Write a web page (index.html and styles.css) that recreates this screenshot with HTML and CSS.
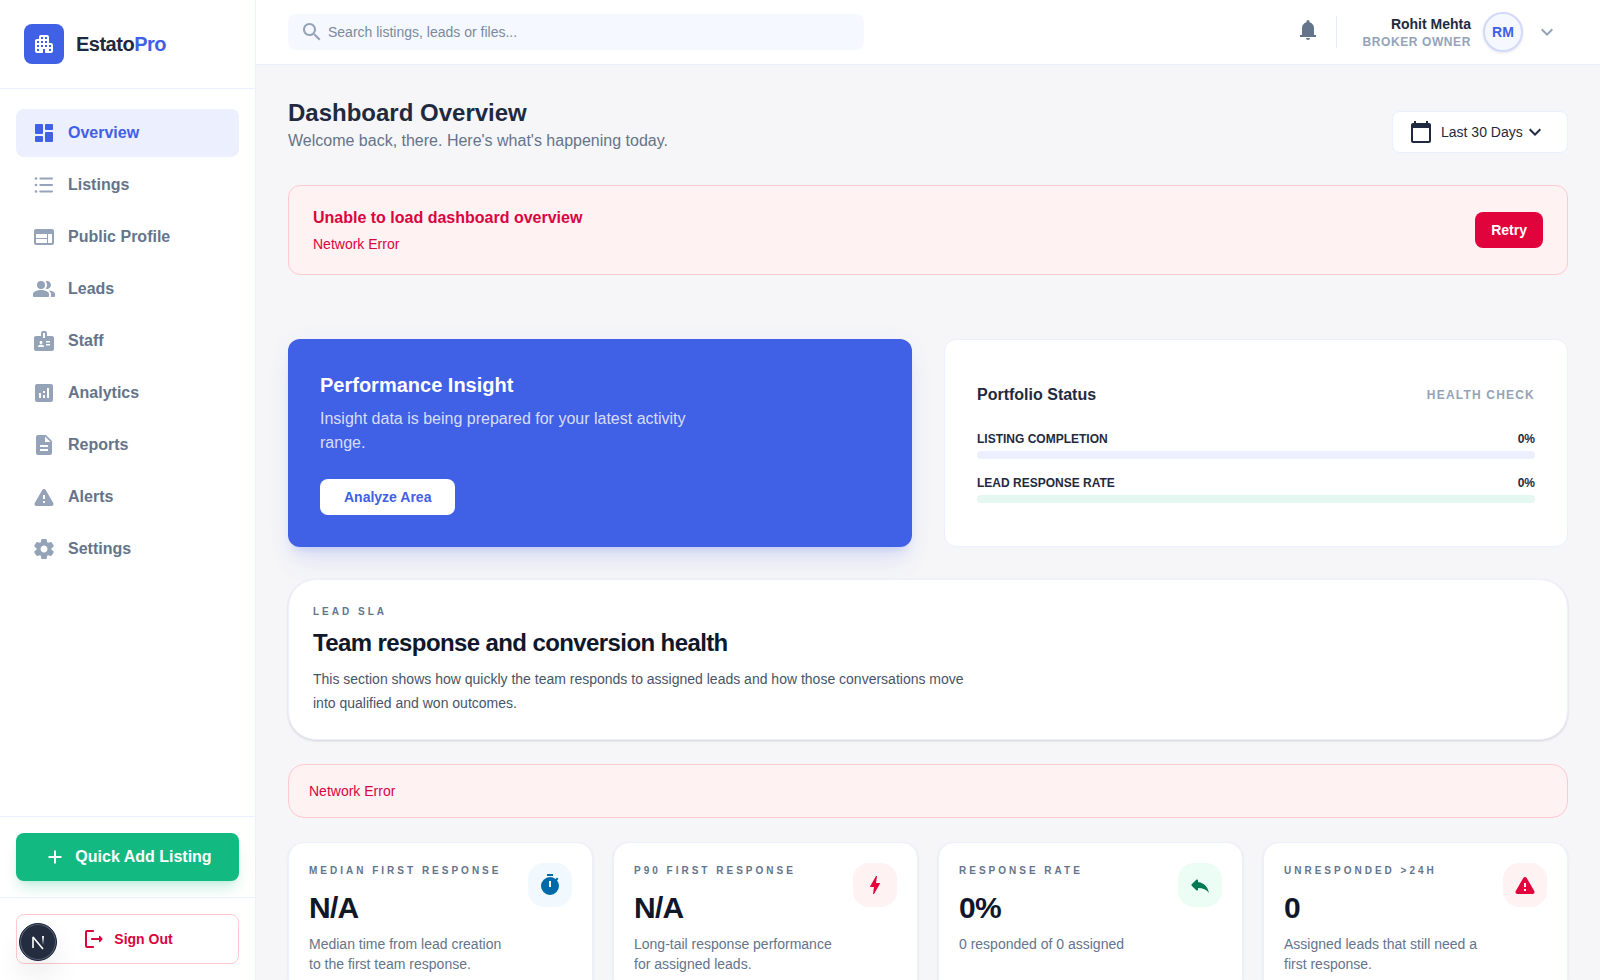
FILE: index.html
```html
<!DOCTYPE html>
<html lang="en">
<head>
    <meta charset="UTF-8">
    <meta name="viewport" content="width=device-width, initial-scale=1.0">
    <title>EstatoPro - Dashboard</title>
    <link rel="stylesheet" href="styles.css">
</head>
<body>
    <div class="app">
        <aside class="sidebar">
            <div class="brand">
                <div class="brand-icon">
                    <svg class="icon" viewBox="0 0 24 24"><path d="M17 11V5c0-1.1-.9-2-2-2H9c-1.1 0-2 .9-2 2v2H5c-1.1 0-2 .9-2 2v10c0 1.1.9 2 2 2h5c.55 0 1-.45 1-1v-3h2v3c0 .55.45 1 1 1h5c1.1 0 2-.9 2-2v-6c0-1.1-.9-2-2-2h-2zM7 19H5v-2h2v2zm0-4H5v-2h2v2zm0-4H5V9h2v2zm4 4H9v-2h2v2zm0-4H9V9h2v2zm0-4H9V5h2v2zm4 8h-2v-2h2v2zm0-4h-2V9h2v2zm0-4h-2V5h2v2zm4 12h-2v-2h2v2zm0-4h-2v-2h2v2z"/></svg>
                </div>
                <span class="brand-name">Estato<span class="brand-accent">Pro</span></span>
            </div>

            <nav class="nav">
                <a href="#" class="nav-link active">
                    <svg class="icon" viewBox="0 0 24 24"><rect x="3" y="3" width="8" height="10" rx="1"/><rect x="3" y="15" width="8" height="6" rx="1"/><rect x="13" y="11" width="8" height="10" rx="1"/><rect x="13" y="3" width="8" height="6" rx="1"/></svg>
                    Overview
                </a>
                <a href="#" class="nav-link">
                    <svg class="icon" viewBox="0 0 24 24"><circle cx="4" cy="5.5" r="1.3"/><circle cx="4" cy="12" r="1.3"/><circle cx="4" cy="18.5" r="1.3"/><rect x="7.3" y="4.5" width="13.7" height="2" rx="1"/><rect x="7.3" y="11" width="13.7" height="2" rx="1"/><rect x="7.3" y="17.5" width="13.7" height="2" rx="1"/></svg>
                    Listings
                </a>
                <a href="#" class="nav-link">
                    <svg class="icon" viewBox="0 0 24 24"><path d="M20 4H4c-1.1 0-1.99.9-1.99 2L2 18c0 1.1.9 2 2 2h16c1.1 0 2-.9 2-2V6c0-1.1-.9-2-2-2zm-5 14H4v-4h11v4zm0-5H4V9h11v4zm5 5h-4V9h4v9z"/></svg>
                    Public Profile
                </a>
                <a href="#" class="nav-link">
                    <svg class="icon" viewBox="0 0 24 24"><circle cx="9" cy="8" r="4"/><path d="M16.67 13.13C18.04 14.06 19 15.32 19 17v3h3c.55 0 1-.45 1-1v-2c0-2.18-3.57-3.47-6.33-3.87zM15 12c2.21 0 4-1.79 4-4s-1.79-4-4-4c-.47 0-.91.1-1.33.24C14.5 5.27 15 6.58 15 8s-.5 2.73-1.33 3.76c.42.14.86.24 1.33.24zM9 13c-2.67 0-8 1.34-8 4v2c0 .55.45 1 1 1h14c.55 0 1-.45 1-1v-2c0-2.66-5.33-4-8-4z"/></svg>
                    Leads
                </a>
                <a href="#" class="nav-link">
                    <svg class="icon" viewBox="0 0 24 24"><path d="M20 7h-5V4c0-1.1-.9-2-2-2h-2c-1.1 0-2 .9-2 2v3H4c-1.1 0-2 .9-2 2v11c0 1.1.9 2 2 2h16c1.1 0 2-.9 2-2V9c0-1.1-.9-2-2-2zM9 12c.83 0 1.5.67 1.5 1.5S9.83 15 9 15s-1.5-.67-1.5-1.5S8.17 12 9 12zm3 6H6v-.75c0-1 2-1.5 3-1.5s3 .5 3 1.5V18zm1-9h-2V4h2v5zm5 7.5h-4V15h4v1.5zm0-3h-4V12h4v1.5z"/></svg>
                    Staff
                </a>
                <a href="#" class="nav-link">
                    <svg class="icon" viewBox="0 0 24 24"><path d="M19 3H5c-1.1 0-2 .9-2 2v14c0 1.1.9 2 2 2h14c1.1 0 2-.9 2-2V5c0-1.1-.9-2-2-2zM9 17H7v-5h2v5zm4 0h-2v-3h2v3zm0-5h-2v-2h2v2zm4 5h-2V7h2v10z"/></svg>
                    Analytics
                </a>
                <a href="#" class="nav-link">
                    <svg class="icon" viewBox="0 0 24 24"><path d="M14 2H6c-1.1 0-1.99.9-1.99 2L4 20c0 1.1.89 2 1.99 2H18c1.1 0 2-.9 2-2V8l-6-6zm2 16H8v-2h8v2zm0-4H8v-2h8v2zm-3-5V3.5L18.5 9H13z"/></svg>
                    Reports
                </a>
                <a href="#" class="nav-link">
                    <svg class="icon" viewBox="0 0 24 24"><path d="M4.47 21h15.06c1.54 0 2.5-1.67 1.73-3L13.73 4.99c-.77-1.33-2.69-1.33-3.46 0L2.74 18c-.77 1.33.19 3 1.73 3zM13 14h-2v-4h2v4zm0 4h-2v-2h2v2z"/></svg>
                    Alerts
                </a>
                <a href="#" class="nav-link">
                    <svg class="icon" viewBox="0 0 24 24"><path d="M19.5 12c0-.23-.01-.45-.03-.68l1.86-1.41c.4-.3.51-.86.26-1.3l-1.87-3.23c-.25-.44-.79-.62-1.25-.42l-2.15.91c-.37-.26-.76-.49-1.17-.68l-.29-2.31c-.06-.5-.49-.88-.99-.88h-3.73c-.51 0-.94.38-1 .88l-.29 2.31c-.41.19-.8.42-1.17.68l-2.15-.91c-.46-.2-1-.02-1.25.42L2.41 8.62c-.25.44-.14.99.26 1.3l1.86 1.41c-.02.22-.03.44-.03.67s.01.45.03.68l-1.86 1.41c-.4.3-.51.86-.26 1.3l1.87 3.23c.25.44.79.62 1.25.42l2.15-.91c.37.26.76.49 1.17.68l.29 2.31c.06.5.49.88.99.88h3.73c.5 0 .93-.38.99-.88l.29-2.31c.41-.19.8-.42 1.17-.68l2.15.91c.46.2 1 .02 1.25-.42l1.87-3.23c.25-.44.14-.99-.26-1.3l-1.86-1.41c.03-.23.04-.45.04-.68zm-7.46 3.5c-1.93 0-3.5-1.57-3.5-3.5s1.57-3.5 3.5-3.5 3.5 1.57 3.5 3.5-1.57 3.5-3.5 3.5z"/></svg>
                    Settings
                </a>
            </nav>

            <div class="sidebar-section">
                <button class="add-btn">
                    <svg class="icon" viewBox="0 0 24 24"><path d="M18.5 13H13v5.5h-2V13H5.5v-2H11V5.5h2V11h5.5z"/></svg>
                    Quick Add Listing
                </button>
            </div>
            <div class="sidebar-section">
                <button class="signout-btn">
                    <svg class="icon" viewBox="0 0 24 24"><path d="M5 5h6c.55 0 1-.45 1-1s-.45-1-1-1H5c-1.1 0-2 .9-2 2v14c0 1.1.9 2 2 2h6c.55 0 1-.45 1-1s-.45-1-1-1H5V5zM20.65 11.65l-2.79-2.79c-.32-.32-.86-.1-.86.35V11h-7c-.55 0-1 .45-1 1s.45 1 1 1h7v1.79c0 .45.54.67.85.35l2.79-2.79c.2-.19.2-.51.01-.7z"/></svg>
                    Sign Out
                </button>
            </div>
        </aside>

        <div class="page">
            <header class="topbar">
                <div class="search">
                    <svg class="icon" viewBox="0 0 24 24"><path d="M15.5 14h-.79l-.28-.27C15.41 12.59 16 11.11 16 9.5 16 5.91 13.09 3 9.5 3S3 5.91 3 9.5 5.91 16 9.5 16c1.61 0 3.09-.59 4.23-1.57l.27.28v.79l5 4.99L20.49 19l-4.99-5zm-6 0C7.01 14 5 11.99 5 9.5S7.01 5 9.5 5 14 7.01 14 9.5 11.99 14 9.5 14z"/></svg>
                    <input type="text" aria-label="Search" placeholder="Search listings, leads or files...">
                </div>
                <div class="topbar-right">
                    <button class="bell-btn" aria-label="Notifications">
                        <svg class="icon" viewBox="0 0 24 24"><path d="M4 19v-2h2v-7c0-2.8 1.7-5 4.5-5.8v-.7a1.5 1.5 0 0 1 3 0v.7C16.3 5 18 7.2 18 10v7h2v2zM12 22a2 2 0 0 1-2-2h4a2 2 0 0 1-2 2z"/></svg>
                    </button>
                    <button class="profile">
                        <span class="profile-text">
                            <span class="profile-name">Rohit Mehta</span>
                            <span class="profile-role">BROKER OWNER</span>
                        </span>
                        <span class="avatar">RM</span>
                        <svg class="icon" viewBox="0 0 24 24"><path d="M7.4 8.6 12 13.2l4.6-4.6L18 10l-6 6-6-6z"/></svg>
                    </button>
                </div>
            </header>

            <main class="content">
                <div class="page-head">
                    <div>
                        <h1>Dashboard Overview</h1>
                        <p>Welcome back, there. Here's what's happening today.</p>
                    </div>
                    <div class="range">
                        <svg class="icon" viewBox="0 0 24 24"><path d="M20 3h-1V1h-2v2H7V1H5v2H4c-1.1 0-2 .9-2 2v16c0 1.1.9 2 2 2h16c1.1 0 2-.9 2-2V5c0-1.1-.9-2-2-2m0 18H4V8h16z"/></svg>
                        <select aria-label="Date range">
                            <option>Last 30 Days</option>
                            <option>Last 7 Days</option>
                            <option>Last 90 Days</option>
                        </select>
                        <svg class="icon range-arrow" viewBox="0 0 24 24"><path d="M7.4 8.6 12 13.2l4.6-4.6L18 10l-6 6-6-6z"/></svg>
                    </div>
                </div>

                <div class="error-banner">
                    <div>
                        <h2>Unable to load dashboard overview</h2>
                        <p>Network Error</p>
                    </div>
                    <button class="retry-btn">Retry</button>
                </div>

                <div class="panels">
                    <section class="insight">
                        <h2>Performance Insight</h2>
                        <p>Insight data is being prepared for your latest activity range.</p>
                        <button class="analyze-btn">Analyze Area</button>
                    </section>

                    <section class="portfolio">
                        <div class="portfolio-head">
                            <h2>Portfolio Status</h2>
                            <span>HEALTH CHECK</span>
                        </div>
                        <div class="meters">
                            <div class="meter">
                                <div class="meter-label"><span>LISTING COMPLETION</span><span>0%</span></div>
                                <div class="track track-blue"></div>
                            </div>
                            <div class="meter">
                                <div class="meter-label"><span>LEAD RESPONSE RATE</span><span>0%</span></div>
                                <div class="track track-green"></div>
                            </div>
                        </div>
                    </section>
                </div>

                <section class="sla">
                    <div class="sla-intro">
                        <div class="eyebrow">LEAD SLA</div>
                        <h2>Team response and conversion health</h2>
                        <p>This section shows how quickly the team responds to assigned leads and how those conversations move into qualified and won outcomes.</p>
                    </div>

                    <div class="sla-error">Network Error</div>

                    <div class="stats">
                        <div class="stat">
                            <div class="stat-text">
                                <div class="eyebrow">MEDIAN FIRST RESPONSE</div>
                                <div class="stat-value">N/A</div>
                                <p>Median time from lead creation to the first team response.</p>
                            </div>
                            <div class="stat-icon sky">
                                <svg class="icon" viewBox="0 0 24 24"><path d="M9 1h6v2H9zM19.03 7.39l1.42-1.42c-.43-.51-.9-.99-1.41-1.41l-1.42 1.42A8.96 8.96 0 0 0 12 4a9 9 0 1 0 9 9c0-2.12-.74-4.07-1.97-5.61zM13 14h-2V8h2v6z"/></svg>
                            </div>
                        </div>
                        <div class="stat">
                            <div class="stat-text">
                                <div class="eyebrow">P90 FIRST RESPONSE</div>
                                <div class="stat-value">N/A</div>
                                <p>Long-tail response performance for assigned leads.</p>
                            </div>
                            <div class="stat-icon rose">
                                <svg class="icon" viewBox="0 0 24 24"><path d="M11 21h-1l1-7H7.5c-.58 0-.57-.32-.38-.66.19-.34.05-.08.07-.12C8.48 10.94 10.42 7.54 13 3h1l-1 7h3.5c.49 0 .56.33.47.51l-.07.15C12.96 17.55 11 21 11 21z"/></svg>
                            </div>
                        </div>
                        <div class="stat">
                            <div class="stat-text">
                                <div class="eyebrow">RESPONSE RATE</div>
                                <div class="stat-value">0%</div>
                                <p>0 responded of 0 assigned</p>
                            </div>
                            <div class="stat-icon green">
                                <svg class="icon" viewBox="0 0 24 24"><path d="M10 9V7.41c0-.89-1.08-1.34-1.71-.71L3.7 11.29c-.39.39-.39 1.02 0 1.41l4.59 4.59c.63.63 1.71.19 1.71-.7V14.9c5 0 8.5 1.6 11 5.1-1-5-4-10-11-11z"/></svg>
                            </div>
                        </div>
                        <div class="stat">
                            <div class="stat-text">
                                <div class="eyebrow">UNRESPONDED &gt;24H</div>
                                <div class="stat-value">0</div>
                                <p>Assigned leads that still need a first response.</p>
                            </div>
                            <div class="stat-icon rose">
                                <svg class="icon" viewBox="0 0 24 24"><path d="M4.47 21h15.06c1.54 0 2.5-1.67 1.73-3L13.73 4.99c-.77-1.33-2.69-1.33-3.46 0L2.74 18c-.77 1.33.19 3 1.73 3zM13 14h-2v-4h2v4zm0 4h-2v-2h2v2z"/></svg>
                            </div>
                        </div>
                    </div>
                </section>
            </main>
        </div>
    </div>

    <!-- Dev tools badge -->
    <button class="dev-badge" aria-label="Open dev tools">
        <svg viewBox="0 0 36 36" fill="none">
            <defs>
                <linearGradient id="fade" x1="0" y1="0" x2="0" y2="1">
                    <stop offset="0" stop-color="#fff"/>
                    <stop offset="1" stop-color="#fff" stop-opacity="0"/>
                </linearGradient>
            </defs>
            <path d="M13 24V13L23 25" stroke="#fff" stroke-width="1.6" stroke-linejoin="bevel"/>
            <rect x="22" y="12" width="2" height="9" fill="url(#fade)"/>
        </svg>
    </button>
</body>
</html>
```

FILE: styles.css
```css
* {
    margin: 0;
    padding: 0;
    box-sizing: border-box;
}

:root {
    --primary: #4060e6;
    --line: #eceffd;
    --dark: #1f2a40;
    --ink: #0f172a;
    --muted: #64748b;
    --light: #94a3b8;
    --red: #e0033c;
    --red-text: #d9053f;
    --red-bg: #fef2f2;
    --red-line: #ffc9d0;
}

body {
    font-family: Helvetica, "Liberation Sans", Arial, sans-serif;
    font-size: 16px;
    line-height: 24px;
    background: #f6f6f8;
    color: var(--dark);
}

button,
input,
select {
    font: inherit;
    color: inherit;
    border: none;
    background: none;
}

button {
    cursor: pointer;
}

a {
    color: inherit;
    text-decoration: none;
}

.icon {
    display: block;
    width: 24px;
    height: 24px;
    fill: currentColor;
    flex-shrink: 0;
}

.app {
    display: flex;
    height: 100vh;
}

/* Sidebar */
.sidebar {
    width: 256px;
    flex-shrink: 0;
    display: flex;
    flex-direction: column;
    background: white;
    border-right: 1px solid var(--line);
}

.brand {
    display: flex;
    align-items: center;
    gap: 12px;
    padding: 24px;
    border-bottom: 1px solid var(--line);
}

.brand-icon {
    width: 40px;
    height: 40px;
    display: flex;
    align-items: center;
    justify-content: center;
    border-radius: 8px;
    background: var(--primary);
    color: white;
}

.brand-name {
    font-size: 20px;
    line-height: 28px;
    font-weight: bold;
    letter-spacing: -0.025em;
}

.brand-accent {
    color: var(--primary);
}

.nav {
    flex: 1;
    display: flex;
    flex-direction: column;
    gap: 4px;
    padding: 20px 16px;
    overflow-y: auto;
}

.nav-link {
    display: flex;
    align-items: center;
    gap: 12px;
    padding: 12px 16px;
    border-radius: 8px;
    font-weight: bold;
    color: var(--muted);
}

.nav-link .icon {
    color: var(--light);
}

.nav-link.active {
    background: #eceffd;
    color: var(--primary);
}

.nav-link.active .icon {
    color: var(--primary);
}

.sidebar-section {
    padding: 16px;
    border-top: 1px solid var(--line);
}

.add-btn,
.signout-btn {
    width: 100%;
    display: flex;
    align-items: center;
    justify-content: center;
    gap: 8px;
    padding: 12px;
    border-radius: 8px;
    font-weight: bold;
}

.add-btn {
    background: #12b981;
    color: white;
    box-shadow: 0 10px 15px -3px rgba(16, 185, 129, 0.2), 0 4px 6px -4px rgba(16, 185, 129, 0.2);
}

.signout-btn {
    border: 1px solid var(--red-line);
    color: var(--red-text);
    font-size: 14px;
}

/* Top bar */
.page {
    flex: 1;
    min-width: 0;
    display: flex;
    flex-direction: column;
}

.topbar {
    display: flex;
    align-items: center;
    justify-content: space-between;
    flex-shrink: 0;
    height: 65px;
    padding: 0 32px;
    background: white;
    border-bottom: 1px solid var(--line);
}

.search {
    flex: 1;
    max-width: 576px;
    height: 36px;
    display: flex;
    align-items: center;
    gap: 4px;
    padding: 0 12px;
    border-radius: 8px;
    background: #f5f8fe;
    color: var(--light);
}

.search input {
    flex: 1;
    font-size: 14px;
    line-height: 20px;
    outline: none;
    color: var(--dark);
}

.search input::placeholder {
    color: #7c899d;
    opacity: 1;
}

.topbar-right {
    display: flex;
    align-items: center;
    gap: 16px;
}

.bell-btn {
    padding-bottom: 5px;
    color: var(--muted);
}

.profile {
    display: flex;
    align-items: center;
    gap: 12px;
    height: 32px;
    padding: 0 9px 0 25px;
    border-left: 1px solid #e8ebfc;
    text-align: right;
}

.profile-text {
    display: flex;
    flex-direction: column;
}

.profile-name {
    font-size: 14px;
    line-height: 20px;
    font-weight: bold;
}

.profile-role {
    font-size: 12px;
    line-height: 16px;
    font-weight: bold;
    letter-spacing: 0.05em;
    color: var(--light);
}

.avatar {
    width: 40px;
    height: 40px;
    display: flex;
    align-items: center;
    justify-content: center;
    border: 2px solid #d3d9f9;
    border-radius: 50%;
    background: #f5f8fe;
    box-shadow: 0 1px 3px rgba(0, 0, 0, 0.1);
    font-size: 14px;
    font-weight: bold;
    color: var(--primary);
}

.profile .icon {
    color: var(--light);
}

/* Content */
.content {
    flex: 1;
    padding: 32px;
    overflow-y: auto;
    scrollbar-width: none;
}

.page-head {
    display: flex;
    align-items: flex-end;
    justify-content: space-between;
    margin-bottom: 32px;
}

.page-head h1 {
    font-size: 24px;
    line-height: 32px;
}

.page-head p {
    color: var(--muted);
}

.range {
    position: relative;
    display: flex;
    align-items: center;
    gap: 8px;
    padding: 8px 16px;
    border: 1px solid var(--line);
    border-radius: 8px;
    background: white;
}

.range select {
    width: 110px;
    font-size: 14px;
    line-height: 20px;
    appearance: none;
    outline: none;
}

.range-arrow {
    position: absolute;
    right: 20px;
    pointer-events: none;
}

.error-banner {
    display: flex;
    align-items: center;
    justify-content: space-between;
    padding: 20px 24px;
    margin-bottom: 64px;
    border: 1px solid var(--red-line);
    border-radius: 12px;
    background: var(--red-bg);
    color: var(--red-text);
}

.error-banner h2 {
    font-size: 16px;
    margin-bottom: 4px;
}

.error-banner p {
    font-size: 14px;
    line-height: 20px;
}

.retry-btn {
    padding: 8px 16px;
    border-radius: 8px;
    background: var(--red);
    color: white;
    font-size: 14px;
    line-height: 20px;
    font-weight: bold;
}

.panels {
    display: grid;
    grid-template-columns: 1fr 1fr;
    gap: 32px;
    margin-bottom: 32px;
}

.insight {
    padding: 32px;
    border-radius: 12px;
    background: var(--primary);
    color: white;
    box-shadow: 0 20px 25px -5px rgba(64, 96, 230, 0.1), 0 8px 10px -6px rgba(64, 96, 230, 0.2), 0 4px 24px rgba(64, 96, 230, 0.06);
}

.insight h2 {
    font-size: 20px;
    line-height: 28px;
    margin-bottom: 8px;
}

.insight p {
    max-width: 384px;
    margin-bottom: 24px;
    color: rgba(255, 255, 255, 0.8);
}

.analyze-btn {
    padding: 8px 24px;
    border-radius: 8px;
    background: white;
    color: var(--primary);
    font-size: 14px;
    line-height: 20px;
    font-weight: bold;
}

.portfolio {
    display: flex;
    flex-direction: column;
    justify-content: center;
    gap: 24px;
    padding: 32px;
    border: 1px solid var(--line);
    border-radius: 12px;
    background: white;
}

.portfolio-head {
    display: flex;
    align-items: center;
    justify-content: space-between;
}

.portfolio-head h2 {
    font-size: 16px;
}

.portfolio-head span {
    font-size: 12px;
    line-height: 16px;
    font-weight: bold;
    letter-spacing: 0.1em;
    color: var(--light);
}

.meters {
    display: flex;
    flex-direction: column;
    gap: 16px;
}

.meter-label {
    display: flex;
    justify-content: space-between;
    margin-bottom: 4px;
    font-size: 12px;
    line-height: 16px;
    font-weight: bold;
}

.track {
    height: 8px;
    border-radius: 4px;
}

.track-blue {
    background: #eceffd;
}

.track-green {
    background: #e4f7f0;
}

/* Lead SLA */
.sla {
    display: flex;
    flex-direction: column;
    gap: 24px;
}

.sla-intro {
    padding: 24px;
    border: 1px solid var(--line);
    border-radius: 28px;
    background: white;
    box-shadow: 0 1px 3px rgba(15, 23, 42, 0.1), 0 1px 2px rgba(15, 23, 42, 0.06);
}

.eyebrow {
    font-size: 10px;
    line-height: 15px;
    font-weight: bold;
    letter-spacing: 3px;
    color: var(--muted);
}

.sla-intro h2 {
    margin: 8px 0;
    font-size: 24px;
    line-height: 32px;
    letter-spacing: -0.025em;
    color: var(--ink);
}

.sla-intro p {
    max-width: 672px;
    font-size: 14px;
    color: #475569;
}

.sla-error {
    padding: 16px 20px;
    border: 1px solid var(--red-line);
    border-radius: 16px;
    background: var(--red-bg);
    color: var(--red-text);
    font-size: 14px;
    line-height: 20px;
}

.stats {
    display: grid;
    grid-template-columns: repeat(4, 1fr);
    gap: 20px;
}

.stat {
    display: flex;
    align-items: flex-start;
    justify-content: space-between;
    gap: 16px;
    padding: 20px;
    border: 1px solid var(--line);
    border-radius: 16px;
    background: white;
    box-shadow: 0 1px 3px rgba(15, 23, 42, 0.08);
}

.stat-value {
    margin: 12px 0 8px;
    font-size: 30px;
    line-height: 36px;
    font-weight: bold;
    letter-spacing: -0.025em;
    color: var(--ink);
}

.stat p {
    font-size: 14px;
    line-height: 20px;
    color: var(--muted);
}

.stat .eyebrow {
    white-space: nowrap;
}

.stat-text {
    flex: 1;
    min-width: 0;
}

.stat-icon {
    padding: 10px;
    border-radius: 16px;
}

.sky {
    background: #f2f9fe;
    color: #0069a8;
}

.rose {
    background: var(--red-bg);
    color: var(--red);
}

.green {
    background: #ecfdf5;
    color: #007a55;
}

.dev-badge {
    position: fixed;
    left: 19px;
    bottom: 19px;
    width: 38px;
    height: 38px;
    border: 1px solid #18233a;
    border-radius: 50%;
    background: #232d3f;
    box-shadow: inset 0 0 0 1px #5b6577, 0 16px 32px -8px rgba(0, 0, 0, 0.24);
}

.dev-badge svg {
    display: block;
    width: 36px;
    height: 36px;
}
```
